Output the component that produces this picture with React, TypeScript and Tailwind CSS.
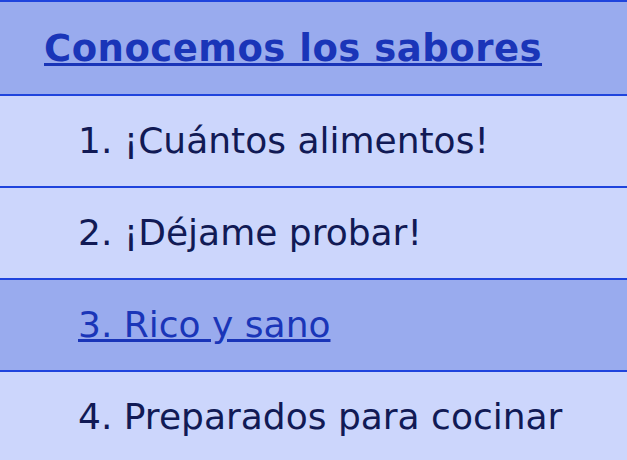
export default function App() {
  const items = [
    { t: "1. ¡Cuántos alimentos!", active: false },
    { t: "2. ¡Déjame probar!", active: false },
    { t: "3. Rico y sano", active: true },
    { t: "4. Preparados para cocinar", active: false },
  ];
  return (
    <div className="w-[627px] h-[460px] overflow-hidden bg-[#ccd6fc]" style={{ fontFamily: '"DejaVu Sans", Verdana, sans-serif' }}>
      <div className="h-[96px] border-t-2 border-b-2 border-[#1f44dd] bg-[#99abee] flex items-center pl-[44px]">
        <a href="#" className="text-[37px] tracking-[0.5px] font-bold text-[#1a35b8] underline leading-none">Conocemos los sabores</a>
      </div>
      <ul>
        {items.map((it) => (
          <li
            key={it.t}
            className={`h-[92px] border-b-2 border-[#1f44dd] flex items-center pl-[78px] ${it.active ? "bg-[#99abee]" : "bg-[#ccd6fc]"}`}
          >
            {it.active ? (
              <a href="#" className="text-[36px] text-[#1a35b8] underline leading-none">{it.t}</a>
            ) : (
              <span className="text-[36px] text-[#111a55] leading-none">{it.t}</span>
            )}
          </li>
        ))}
      </ul>
    </div>
  );
}
